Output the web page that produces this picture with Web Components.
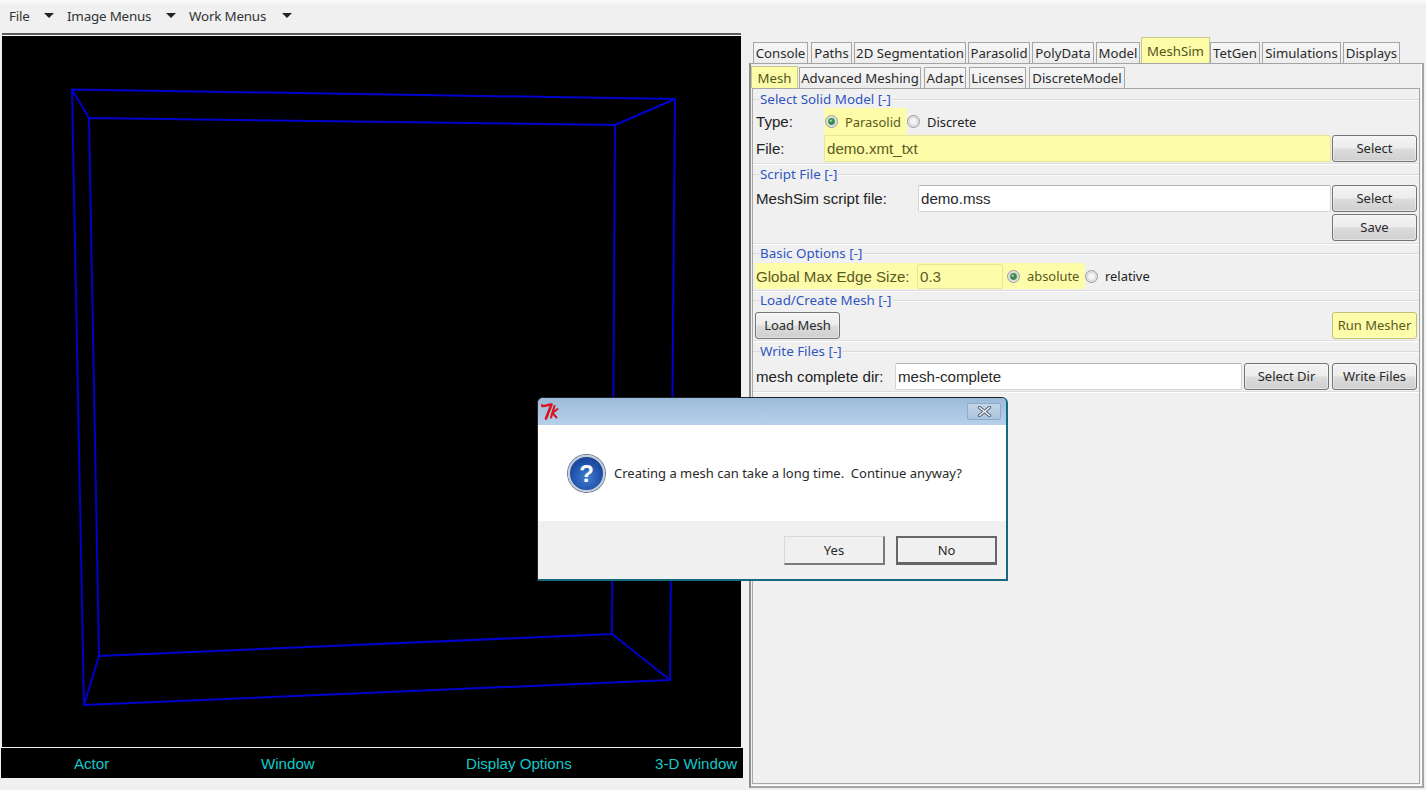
<!DOCTYPE html>
<html lang="en">
<head>
<meta charset="utf-8">
<title>MeshSim</title>
<style>
    html, body { margin: 0; height: 100%; }
    body {
        width: 1426px;
        height: 790px;
        overflow: hidden;
        background: #f0f0f0;
        color: #222;
        font: 13.4px "Noto Sans", sans-serif;
    }
    .sp { flex: none; }
    .arial { font-family: "Liberation Sans", sans-serif; font-size: 15.1px; }
</style>
</head>
<body>
<app-shell>
    <menu-bar slot="menu">
        <menu-item style="width:58px">File</menu-item>
        <menu-item style="width:122px">Image Menus</menu-item>
        <menu-item style="width:116px">Work Menus</menu-item>
    </menu-bar>
    <wire-view slot="view"></wire-view>
    <status-bar slot="status">
        <span style="left:74px">Actor</span>
        <span style="left:261px">Window</span>
        <span style="left:466px">Display Options</span>
        <span style="left:655px">3-D Window</span>
    </status-bar>
    <tab-strip slot="tabs" tall="26" style="margin-left:4px">
        <tab-button style="width:55px;margin-right:3px">Console</tab-button>
        <tab-button style="width:41px;margin-right:2px">Paths</tab-button>
        <tab-button style="width:112px;margin-right:2px">2D Segmentation</tab-button>
        <tab-button style="width:62px;margin-right:2px">Parasolid</tab-button>
        <tab-button style="width:62px;margin-right:2px">PolyData</tab-button>
        <tab-button style="width:44px;margin-right:1px">Model</tab-button>
        <tab-button selected style="width:69px">MeshSim</tab-button>
        <tab-button style="width:50px;margin-right:2px">TetGen</tab-button>
        <tab-button style="width:79px;margin-right:2px">Simulations</tab-button>
        <tab-button style="width:57px">Displays</tab-button>
    </tab-strip>
    <tab-strip slot="subtabs" tall="22">
        <tab-button selected style="width:47px;margin-right:1px">Mesh</tab-button>
        <tab-button style="width:122px;margin-right:3px">Advanced Meshing</tab-button>
        <tab-button style="width:42px;margin-right:3px">Adapt</tab-button>
        <tab-button style="width:57px;margin-right:3px">Licenses</tab-button>
        <tab-button style="width:96px">DiscreteModel</tab-button>
    </tab-strip>

    <option-section slot="form" title="Select Solid Model [-]" style="--top:0px">
        <field-row style="height:27px">
            <span class="sp arial" style="width:68px">Type:</span>
            <hi-light style="width:83px;height:27px;padding-left:1px">
                <tk-radio checked>Parasolid</tk-radio>
            </hi-light>
            <tk-radio>Discrete</tk-radio>
        </field-row>
        <field-row style="height:27px">
            <span class="sp arial" style="width:68px">File:</span>
            <tk-entry marked>demo.xmt_txt</tk-entry>
            <tk-button>Select</tk-button>
        </field-row>
    </option-section>

    <option-section slot="form" title="Script File [-]" style="--top:3px;--gap:3px">
        <field-row style="height:29px">
            <span class="sp arial" style="width:162px">MeshSim script file:</span>
            <tk-entry>demo.mss</tk-entry>
            <tk-button>Select</tk-button>
        </field-row>
        <field-row style="height:29px">
            <tk-button style="margin-left:auto">Save</tk-button>
        </field-row>
    </option-section>

    <option-section slot="form" title="Basic Options [-]" style="--top:2px;--gap:3px">
        <field-row style="height:26px">
            <hi-light style="width:330px;height:26px;margin-left:-1px;padding-left:1px">
                <span class="sp arial" style="width:161px">Global Max Edge Size:</span>
                <tk-entry marked class="sp" style="width:86px;flex:none;height:25px">0.3</tk-entry>
                <tk-radio checked style="margin-left:4px">absolute</tk-radio>
            </hi-light>
            <tk-radio>relative</tk-radio>
        </field-row>
    </option-section>

    <option-section slot="form" title="Load/Create Mesh [-]" style="--top:2px;--gap:4px">
        <field-row style="height:28px">
            <tk-button style="margin-left:-1px">Load Mesh</tk-button>
            <tk-button marked style="margin-left:auto">Run Mesher</tk-button>
        </field-row>
    </option-section>

    <option-section slot="form" title="Write Files [-]" style="--top:3px;--gap:4px">
        <field-row style="height:28px">
            <span class="sp arial" style="width:139px">mesh complete dir:</span>
            <tk-entry>mesh-complete</tk-entry>
            <tk-button style="margin:0 3px 0 2px">Select Dir</tk-button>
            <tk-button style="margin:0">Write Files</tk-button>
        </field-row>
    </option-section>

    <message-dialog slot="dialog">Creating a mesh can take a long time.&nbsp; Continue anyway?</message-dialog>
</app-shell>

<script>
// main window frame, everything else gets slotted in
const shellTemplate = document.createElement('template')
shellTemplate.innerHTML = `
<style>
    :host {
        display: grid;
        grid-template-columns: 749px 1fr;
        grid-template-rows: 33px 1fr;
        width: 1426px;
        height: 790px;
        position: relative;
    }
    #menu { grid-column: 1 / 3; }
    #left { padding-left: 1px; }
    #right { padding: 4px 2px 2px 0; display: flex; flex-direction: column; min-height: 0; }
    #outer {
        flex: 1;
        display: flex;
        flex-direction: column;
        min-height: 0;
        border: 2px solid #a4a4a4;
        border-left-color: #8c8c8c;
        border-top-width: 1px;
        padding: 2px 1px 2px 0;
        box-shadow: inset -1px -1px 0 #fff;
    }
    #inner {
        flex: 1;
        border: 1px solid #a8a8a8;
        padding: 3px 0 0 0;
        margin-right: 1px;
        margin-left: 1px;
    }
</style>
<div id="menu"><slot name="menu"></slot></div>
<div id="left">
    <slot name="view"></slot>
    <slot name="status"></slot>
</div>
<div id="right">
    <slot name="tabs"></slot>
    <div id="outer">
        <slot name="subtabs"></slot>
        <div id="inner"><slot name="form"></slot></div>
    </div>
</div>
<slot name="dialog"></slot>
`
customElements.define('app-shell', class AppShell extends HTMLElement {
    constructor() {
        super()
        this.attachShadow({ mode: 'open' })
        this.shadowRoot.appendChild(shellTemplate.content.cloneNode(true))
    }
})

customElements.define('menu-bar', class MenuBar extends HTMLElement {
    constructor() {
        super()
        this.attachShadow({ mode: 'open' }).innerHTML = `
        <style>
            :host {
                display: flex;
                align-items: center;
                height: 33px;
                box-sizing: border-box;
                padding: 0 0 2px 9px;
                background: linear-gradient(#fbfbfb, #f0f0f0 6px);
                color: #333;
                font: 13.4px "Noto Sans", sans-serif;
                letter-spacing: -.2px;
            }
        </style>
        <slot></slot>`
    }
})

customElements.define('menu-item', class MenuItem extends HTMLElement {
    constructor() {
        super()
        this.attachShadow({ mode: 'open' }).innerHTML = `
        <style>
            :host { display: flex; align-items: center; justify-content: space-between; padding-right: 13px; box-sizing: border-box; }
            svg { width: 10px; height: 5px; }
        </style>
        <span><slot></slot></span>
        <svg viewBox="0 0 10 5"><path d="M0 0h10L5 5z" fill="#222"/></svg>`
    }
})

customElements.define('wire-view', class WireView extends HTMLElement {
    constructor() {
        super()
        this.attachShadow({ mode: 'open' }).innerHTML = `
        <style>
            :host {
                display: block;
                width: 739px;
                height: 711px;
                margin-left: 1px;
                background: #000;
                border-top: 2px solid #5c5c5c;
                position: relative;
            }
            svg { position: absolute; left: 0; top: 0; width: 739px; height: 711px; border-top: 1px solid #fff; margin-top: 0; }
            #lines { fill: none; stroke: #0000cc; stroke-width: 2; stroke-linejoin: round; }
        </style>
        <svg viewBox="2 36 739 711">
            <rect x="2" y="36" width="739" height="711" fill="#000"/>
            <g id="lines">
                <path d="M72 89.5 675 99 670 680 84 705Z"/>
                <path d="M89 118 615 125 612 634 99 656Z"/>
                <path d="M72 89.5 89 118M675 99 615 125M670 680 612 634M84 705 99 656"/>
            </g>
        </svg>`
    }
})

customElements.define('status-bar', class StatusBar extends HTMLElement {
    constructor() {
        super()
        this.attachShadow({ mode: 'open' }).innerHTML = `
        <style>
            :host {
                display: block;
                position: relative;
                width: 742px;
                height: 30px;
                margin-top: 2px;
                background: #000;
                color: #14c8c8;
                font: 15.1px/31px "Liberation Sans", sans-serif;
            }
            ::slotted(span) { position: absolute; top: 0; margin-left: -1px; }
        </style>
        <slot></slot>`
    }
})

customElements.define('tab-strip', class TabStrip extends HTMLElement {
    constructor() {
        super()
        const tall = this.getAttribute('tall')
        this.attachShadow({ mode: 'open' }).innerHTML = `
        <style>
            :host {
                display: flex;
                align-items: flex-end;
                height: ${tall}px;
                font: 13.2px "Noto Sans", sans-serif;
                color: #2a2a2a;
            }
        </style>
        <slot></slot>`
    }
})

customElements.define('tab-button', class TabButton extends HTMLElement {
    constructor() {
        super()
        this.attachShadow({ mode: 'open' }).innerHTML = `
        <style>
            :host {
                display: flex;
                flex: none;
                align-items: center;
                justify-content: center;
                box-sizing: border-box;
                height: 21px;
                padding-bottom: 1px;
                border: 1px solid #a6a6a6;
                border-bottom: 0;
                white-space: nowrap;
                background: linear-gradient(#f6f6f6, #ececec);
            }
            :host([selected]) {
                align-self: stretch;
                height: auto;
                padding-bottom: 0;
                border-color: #c8c890;
                background: #fdfca9;
                color: #55551e;
                position: relative;
                z-index: 1;
            }
        </style>
        <slot></slot>`
    }
})

customElements.define('option-section', class OptionSection extends HTMLElement {
    constructor() {
        super()
        this.attachShadow({ mode: 'open' }).innerHTML = `
        <style>
            :host {
                display: block;
                margin-top: var(--top, 3px);
                padding-bottom: 1px;
                border-bottom: 1px solid #dddddd;
                box-shadow: 0 1px 0 #fff;
            }
            #title {
                display: flex;
                align-items: center;
                height: 14px;
                color: #2f55c0;
                font: 13.4px "Noto Sans", sans-serif;
                white-space: nowrap;
            }
            #title::before { content: ""; width: 7px; height: 1px; background: #dadada; margin-right: 0; }
            #title::after { content: ""; flex: 1; height: 1px; background: #dadada; margin-left: 1px; box-shadow: 0 1px 0 #fafafa; }
            #body { padding: var(--gap, 2px) 2px 0 3px; }
        </style>
        <div id="title"></div>
        <div id="body"><slot></slot></div>`
        this.shadowRoot.querySelector('#title').textContent = this.getAttribute('title')
    }
})

customElements.define('field-row', class FieldRow extends HTMLElement {
    constructor() {
        super()
        this.attachShadow({ mode: 'open' }).innerHTML = `
        <style>
            :host { display: flex; align-items: center; }
        </style>
        <slot></slot>`
    }
})

customElements.define('hi-light', class HiLight extends HTMLElement {
    constructor() {
        super()
        this.attachShadow({ mode: 'open' }).innerHTML = `
        <style>
            :host {
                display: flex;
                flex: none;
                align-items: center;
                box-sizing: border-box;
                background: #fdfca9;
                color: #5a5a1e;
            }
        </style>
        <slot></slot>`
    }
})

customElements.define('tk-entry', class TkEntry extends HTMLElement {
    constructor() {
        super()
        this.attachShadow({ mode: 'open' }).innerHTML = `
        <style>
            :host {
                display: flex;
                flex: 1;
                align-items: center;
                box-sizing: border-box;
                height: 27px;
                padding: 0 2px;
                background: #fff;
                color: #2a2a2a;
                border: 1px solid #d4d4d4;
                border-top-color: #b4b4b4;
                border-radius: 2px;
                font: 15.1px "Liberation Sans", sans-serif;
            }
            :host([marked]) { background: #fdfca9; color: #5a5a1e; border-color: #e6e59a; }
        </style>
        <slot></slot>`
    }
})

customElements.define('tk-radio', class TkRadio extends HTMLElement {
    constructor() {
        super()
        this.attachShadow({ mode: 'open' }).innerHTML = `
        <style>
            :host {
                display: inline-flex;
                flex: none;
                align-items: center;
                gap: 7px;
                font: 12.9px "Noto Sans", sans-serif;
            }
            svg { width: 13px; height: 13px; flex: none; }
        </style>
        <svg viewBox="0 0 13 13">
            <circle cx="6.5" cy="6.5" r="6" fill="#e4e4e4" stroke="#999"/>
            <circle cx="6.5" cy="6.5" r="4" fill="#f4f4f4" stroke="#c6c6c6" stroke-width=".6"/>
            ${this.hasAttribute('checked') ? '<circle cx="6.5" cy="6.5" r="3.4" fill="#3f8a4f"/><circle cx="5.8" cy="5.6" r="1.2" fill="#a5d8a8"/>' : ''}
        </svg>
        <span><slot></slot></span>`
    }
})

customElements.define('tk-button', class TkButton extends HTMLElement {
    constructor() {
        super()
        this.attachShadow({ mode: 'open' }).innerHTML = `
        <style>
            :host {
                display: flex;
                flex: none;
                align-items: center;
                justify-content: center;
                box-sizing: border-box;
                width: 85px;
                height: 27px;
                margin-left: 1px;
                padding-bottom: 1px;
                border: 1px solid #747474;
                border-radius: 3px;
                background: linear-gradient(#f4f4f4, #ececec 48%, #dcdcdc 52%, #cfcfcf);
                box-shadow: inset 0 0 0 1px #fafafa80;
                color: #2a2a2a;
                font: 13px "Noto Sans", sans-serif;
                white-space: nowrap;
            }
            :host([marked]) { background: #fdfca9; color: #5a5a1e; border-color: #c4c45c; }
        </style>
        <slot></slot>`
    }
})

customElements.define('message-dialog', class MessageDialog extends HTMLElement {
    constructor() {
        super()
        this.attachShadow({ mode: 'open' }).innerHTML = `
        <style>
            :host {
                position: absolute;
                left: 537px;
                top: 397px;
                width: 471px;
                height: 184px;
                box-sizing: border-box;
                display: flex;
                flex-direction: column;
                border: 1px solid #222;
                border-right: 2px solid #16687f;
                border-bottom: 2px solid #16687f;
                border-radius: 6px 6px 0 0;
                background: #f0f0f0;
                color: #2a2a2a;
                font: 13px "Noto Sans", sans-serif;
                overflow: hidden;
            }
            #bar {
                height: 27px;
                flex: none;
                display: flex;
                align-items: flex-start;
                justify-content: space-between;
                padding: 5px 5px 0 3px;
                box-sizing: border-box;
                background: linear-gradient(#9cbad9, #b6d0ea);
            }
            #close {
                width: 34px;
                height: 17px;
                box-sizing: border-box;
                border: 1px solid #8eacc8;
                border-radius: 2px;
                background: linear-gradient(#c4d6e8, #aac4de);
                display: flex;
                align-items: center;
                justify-content: center;
            }
            #body {
                height: 96px;
                flex: none;
                background: #fff;
                display: flex;
                align-items: center;
                gap: 9px;
                padding-left: 30px;
                box-sizing: border-box;
            }
            #mark {
                width: 37px;
                height: 37px;
                flex: none;
                box-sizing: border-box;
                border: 2px solid #c4ccd8;
                border-radius: 50%;
                background: radial-gradient(circle at 50% 62%, #3f7ed2, #1d4ea6 60%, #143a86);
                box-shadow: 0 0 0 1px #6c7c98;
                color: #fff;
                font: bold 24px/33px "Liberation Sans", sans-serif;
                text-align: center;
            }
            #foot {
                flex: 1;
                display: flex;
                justify-content: flex-end;
                align-items: flex-start;
                gap: 11px;
                padding: 15px 9px 0 0;
            }
            .btn {
                width: 101px;
                height: 29px;
                box-sizing: border-box;
                display: flex;
                align-items: center;
                justify-content: center;
                background: #f0f0f0;
                border: 1px solid #d8d8d8;
                border-right: 2px solid #7a7a7a;
                border-bottom: 2px solid #7a7a7a;
            }
            .btn.default { border: 2px solid #666; border-bottom-width: 3px; }
        </style>
        <div id="bar">
            <svg width="18" height="17" viewBox="0 0 18 17" fill="none" stroke="#d8141c" stroke-linecap="round" stroke-linejoin="round">
                <path d="M1 2.5C3 4.5 7 1 10.5 1.5L5 15.5" stroke-width="2.6"/>
                <path d="M13.5 3 10 14.5" stroke-width="2.1"/>
                <path d="M16.5 6 11.5 10 15.5 14.5" stroke-width="1.9"/>
            </svg>
            <div id="close">
                <svg width="15" height="11" viewBox="0 0 15 11" fill="none" stroke-linecap="round">
                    <path d="M2.5 1.5 12.5 9.5M12.5 1.5 2.5 9.5" stroke="#55606c" stroke-width="3.4"/>
                    <path d="M2.5 1.5 12.5 9.5M12.5 1.5 2.5 9.5" stroke="#eef2f6" stroke-width="1.6"/>
                </svg>
            </div>
        </div>
        <div id="body">
            <div id="mark">?</div>
            <span><slot></slot></span>
        </div>
        <div id="foot">
            <div class="btn">Yes</div>
            <div class="btn default">No</div>
        </div>`
    }
})
</script>
</body>
</html>
